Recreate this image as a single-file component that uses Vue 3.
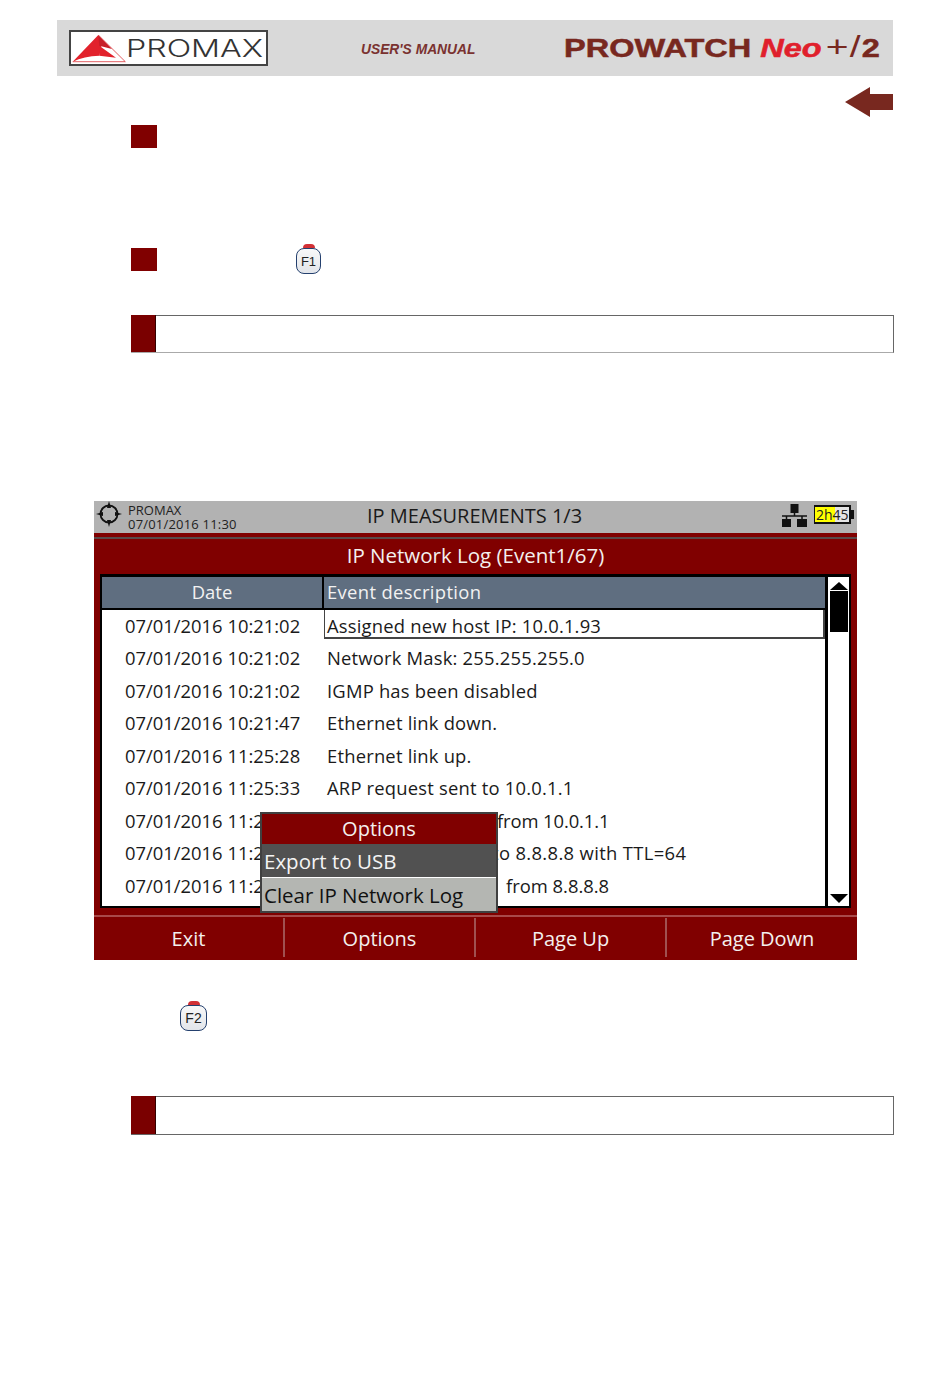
<script setup>
const rows = [
  ['07/01/2016 10:21:02', 'Assigned new host IP: 10.0.1.93', ''],
  ['07/01/2016 10:21:02', 'Network Mask: 255.255.255.0', ''],
  ['07/01/2016 10:21:02', 'IGMP has been disabled', ''],
  ['07/01/2016 10:21:47', 'Ethernet link down.', ''],
  ['07/01/2016 11:25:28', 'Ethernet link up.', ''],
  ['07/01/2016 11:25:33', 'ARP request sent to 10.0.1.1', ''],
  ['07/01/2016 11:2', 'from 10.0.1.1', 'tail-a'],
  ['07/01/2016 11:2', 'to 8.8.8.8 with TTL=64', 'tail-b'],
  ['07/01/2016 11:2', 'from 8.8.8.8', 'tail-c'],
]
const buttons = ['Exit', 'Options', 'Page Up', 'Page Down']
</script>

<template>
  <div class="page">
    <header class="head">
      <div class="logo">
        <svg width="54" height="28" viewBox="0 0 54 28">
          <path d="M0.7 26.7 L26.3 0 L30 8 L27.3 20.7 Q12 21 0.7 26.7 Z" fill="#e2222c" />
          <path d="M26.3 0 L40 14 L27.3 10.7 Z" fill="#c81e28" />
          <path d="M27.3 10.7 L44 22.7 L27.3 20.700 Z" fill="#e2222c" />
          <path d="M26.3 0 L53.3 26.7 H0.7" fill="none" stroke="#d9353a" stroke-width="0.8" />
        </svg>
        <span class="logo-text">PROMAX</span>
      </div>
      <span class="manual">USER'S MANUAL</span>
      <span class="product">PROWATCH <b>Neo</b><i>+/</i>2</span>
    </header>

    <div class="arrow-row">
      <svg width="48" height="30" viewBox="0 0 48 30"><path d="M0 15 L25 0 V7 H48 V23 H25 V30 Z" fill="#78281f" /></svg>
    </div>

    <div class="sq sq-one"></div>
    <div class="key-row">
      <div class="sq"></div>
      <div class="key key-one"><span>F1</span></div>
    </div>
    <div class="note note-one"><div class="note-mark"></div></div>

    <section class="screen">
      <div class="status">
        <svg class="target" width="28" height="28" viewBox="0 0 28 28">
          <circle cx="14" cy="14" r="8.5" fill="none" stroke="#111" stroke-width="1.8" />
          <path d="M14 1 L16 8 H12 Z M14 27 L16 20 H12 Z M1 14 L8 12 V16 Z M27 14 L20 12 V16 Z" fill="#111" />
        </svg>
        <div class="brand"><span>PROMAX</span><span class="stamp">07/01/2016 11:30</span></div>
        <div class="status-title">IP MEASUREMENTS 1/3</div>
        <svg class="net" width="25" height="23" viewBox="0 0 25 23">
          <path d="M8.500 0 H16.500 V9 H8.500 Z M0 15 H9 V23 H0 Z M15 15 H25 V23 H15 Z" fill="#111" />
          <path d="M12.500 9 V12 M0 12 H25 M4.500 12 V15 M20 12 V15" stroke="#111" stroke-width="1.500" />
        </svg>
        <div class="battery">2h45</div>
      </div>
      <div class="rule-band"></div>
      <div class="title">IP Network Log (Event1/67)</div>

      <div class="frame">
        <div class="table">
          <div class="thead">
            <div class="th-date">Date</div>
            <div class="th-event">Event description</div>
          </div>
          <div v-for="(r, i) in rows" :key="i" class="row">
            <div class="date">{{ r[0] }}</div>
            <div class="event" :class="[r[2], { selected: i === 0 }]">{{ r[1] }}</div>
          </div>
        </div>
        <div class="scroll">
          <div class="up"></div>
          <div class="thumb"></div>
          <div class="down"></div>
        </div>
        <div class="popup">
          <div class="pop-title">Options</div>
          <div class="pop-active">Export to USB</div>
          <div class="pop-item">Clear IP Network Log</div>
        </div>
      </div>

      <div class="foot-line"></div>
      <nav class="foot">
        <div v-for="b in buttons" :key="b" class="btn">{{ b }}</div>
      </nav>
    </section>

    <div class="key key-two"><span>F2</span></div>
    <div class="note note-two"><div class="note-mark"></div></div>
  </div>
</template>

<style>
html, body { margin: 0; background: #fff; }
</style>

<style scoped>
.page {
  box-sizing: border-box;
  width: 950px;
  height: 1379px;
  padding: 20px 57px 0;
  font-family: "Open Sans", sans-serif;
  overflow: hidden;
}
.head {
  height: 56px;
  background: #d9d9d9;
  display: flex;
  align-items: center;
  padding: 0 13px 0 12px;
}
.logo {
  box-sizing: border-box;
  flex: none;
  width: 199px;
  height: 36px;
  background: #fff;
  border: 2px solid #444;
  display: flex;
  align-items: center;
}
.logo svg { flex: none; margin: 2px 0 0 1px; }
.logo-text {
  font-family: Inter, "Liberation Sans", sans-serif;
  font-weight: 300;
  font-size: 23.500px;
  color: #333;
  margin-left: 0;
  transform: scaleX(1.37);
  transform-origin: left center;
}
.manual {
  flex: none;
  margin: 3px 0 0 93px;
  font-family: "Liberation Sans", sans-serif;
  font-size: 13.800px;
  font-weight: 700;
  font-style: italic;
  color: #7a3230;
}
.product {
  margin-left: auto;
  font-family: "Liberation Sans", sans-serif;
  font-weight: 700;
  font-size: 25px;
  color: #78281f;
  white-space: nowrap;
  transform: scaleX(1.3);
  transform-origin: right center;
  -webkit-text-stroke: 0.5px currentColor;
}
.product b { color: #e0202c; font-style: italic; }
.product i {
  margin-left: 3px;
  font-style: normal;
  font-weight: 400;
  font-size: 30px;
  line-height: 20px;
  letter-spacing: 1px;
  -webkit-text-stroke: 0;
}
.arrow-row {
  height: 30px;
  margin-top: 11px;
  display: flex;
  justify-content: flex-end;
}
.sq {
  width: 26px;
  height: 23px;
  background: #800000;
}
.sq-one { margin: 8px 0 0 74px; }
.key-row {
  display: flex;
  align-items: flex-end;
  margin: 100px 0 0 74px;
  height: 23px;
}
.key {
  box-sizing: border-box;
  position: relative;
  width: 25px;
  height: 26px;
  border: 1.500px solid #24406e;
  border-radius: 8px;
  background: linear-gradient(#f8f8f8, #e2e5ea);
  display: flex;
  align-items: center;
  justify-content: center;
  font-family: "Liberation Sans", sans-serif;
  font-size: 13px;
  color: #222;
}
.key::before {
  content: "";
  position: absolute;
  top: -5.500px;
  left: 50%;
  width: 12px;
  height: 4px;
  margin-left: -6px;
  background: #d23035;
  border-radius: 6px 6px 0 0;
}
.key-one { margin: 0 0 -3px 139px; }
.key-two {
  width: 27px;
  height: 26px;
  margin: 45px 0 0 123px;
  font-size: 14px;
}
.note {
  box-sizing: border-box;
  margin: 0 -1px 0 74px;
  border: 1px solid #666;
  border-left: 0;
  background: #fff;
}
.note-one { height: 38px; margin-top: 44px; border-bottom-color: #aaa; }
.note-two { height: 39px; margin-top: 65px; }
.note-mark {
  box-sizing: border-box;
  width: 25px;
  height: calc(100% + 1px);
  margin-top: -1px;
  background: #7a0000;
  border-right: 1px solid #300;
}
.screen {
  width: 763px;
  height: 459px;
  margin: 148px 0 0 37px;
  background: #800000;
  display: flex;
  flex-direction: column;
}
.status {
  height: 32px;
  background: #b2b2b2;
  display: flex;
  align-items: center;
  flex: none;
  color: #111;
}
.target { margin: -6px 0 0 1px; flex: none; }
.brand {
  display: flex;
  flex-direction: column;
  flex: none;
  width: 210px;
  margin: -1px 0 0 5px;
  font-size: 13px;
  line-height: 14px;
  color: #222;
}
.stamp { letter-spacing: 0.2px; }
.status-title {
  flex: none;
  width: 320px;
  margin: -3px 0 0 29px;
  font-size: 20px;
  line-height: 28px;
  color: #1a1a1a;
}
.net { margin: -3px 0 0 95px; flex: none; }
.battery {
  box-sizing: border-box;
  position: relative;
  flex: none;
  width: 37px;
  height: 19px;
  margin: -5px 0 0 7px;
  border: 2px solid #111;
  border-left-width: 1px;
  background: linear-gradient(90deg, #ffff00 60%, #e4e4e4 60%);
  font-size: 14px;
  line-height: 15px;
  padding-left: 1px;
  color: #222;
  white-space: nowrap;
}
.battery::after {
  content: "";
  position: absolute;
  right: -5px;
  top: 3px;
  width: 3px;
  height: 9px;
  background: #111;
}
.rule-band {
  box-sizing: border-box;
  flex: none;
  height: 6px;
  border-bottom: 2px solid #5a4a4a;
}
.title {
  flex: none;
  height: 35px;
  line-height: 32px;
  text-align: center;
  font-size: 20.500px;
  color: #f4f0ee;
}
.frame {
  box-sizing: border-box;
  position: relative;
  flex: none;
  width: 751px;
  height: 334px;
  margin-left: 6px;
  background: #000;
  padding: 3px 2px 2px;
  display: flex;
  gap: 3px;
}
.table {
  width: 723px;
  background: #fff;
  flex: none;
  overflow: hidden;
}
.thead {
  height: 30.800px;
  display: flex;
  background: #5f6e80;
  color: #f2f2f2;
  font-size: 18.400px;
  line-height: 30px;
  border-bottom: 2px solid #000;
}
.th-date { width: 220px; text-align: center; }
.th-event {
  flex: 1;
  border-left: 2px solid #000;
  padding-left: 3px;
  letter-spacing: 0.35px;
}
.row {
  height: 32.500px;
  display: flex;
  font-size: 18.400px;
  line-height: 32px;
  color: #1a1a1a;
  white-space: nowrap;
}
.date { flex: none; width: 225px; padding-left: 23px; box-sizing: border-box; }
.event { flex: 1; letter-spacing: 0.2px; }
.selected {
  box-sizing: border-box;
  height: 29px;
  margin-left: -3px;
  padding-left: 2px;
  line-height: 31px;
  border: solid #444;
  border-width: 0 2px 2px 1px;
  background: #fff;
}
.tail-a { padding-left: 170px; letter-spacing: -0.100px; }
.tail-b { padding-left: 165px; letter-spacing: 0.350px; }
.tail-c { padding-left: 179px; letter-spacing: 0; }
.scroll {
  flex: 1;
  background: #fff;
  display: flex;
  flex-direction: column;
  align-items: center;
  position: relative;
}
.up {
  margin-top: 5px;
  border-left: 9px solid transparent;
  border-right: 9px solid transparent;
  border-bottom: 8px solid #000;
}
.thumb {
  width: 18px;
  height: 41px;
  background: #000;
  margin-top: 1px;
}
.down {
  position: absolute;
  bottom: 3px;
  border-left: 9px solid transparent;
  border-right: 9px solid transparent;
  border-top: 9px solid #000;
}
.popup {
  box-sizing: border-box;
  position: absolute;
  left: 160px;
  top: 238px;
  width: 238px;
  height: 101px;
  border: 2px solid #404040;
  background: #b4b6b2;
  z-index: 2;
  white-space: nowrap;
}
.pop-title {
  height: 30px;
  background: #800000;
  color: #f4f0ee;
  text-align: center;
  font-size: 20px;
  line-height: 29px;
}
.pop-active {
  height: 33px;
  background: #515151;
  color: #f4f4f4;
  font-size: 20.500px;
  line-height: 34px;
  padding-left: 2px;
  border-bottom: 1px solid #fff;
}
.pop-item {
  height: 33px;
  color: #111;
  font-size: 20.500px;
  line-height: 34px;
  padding-left: 2px;
}
.foot-line {
  flex: none;
  height: 2px;
  margin-top: 7px;
  background: #a84a4a;
}
.foot {
  flex: 1;
  display: grid;
  grid-template-columns: 191px 191px 191px 1fr;
  align-items: start;
}
.btn {
  box-sizing: border-box;
  height: 39px;
  margin-top: 1px;
  text-align: center;
  color: #f4f0ee;
  font-size: 20px;
  line-height: 42px;
  border-right: 2px solid #a05050;
}
.btn:last-child { border-right: 0; }
</style>
